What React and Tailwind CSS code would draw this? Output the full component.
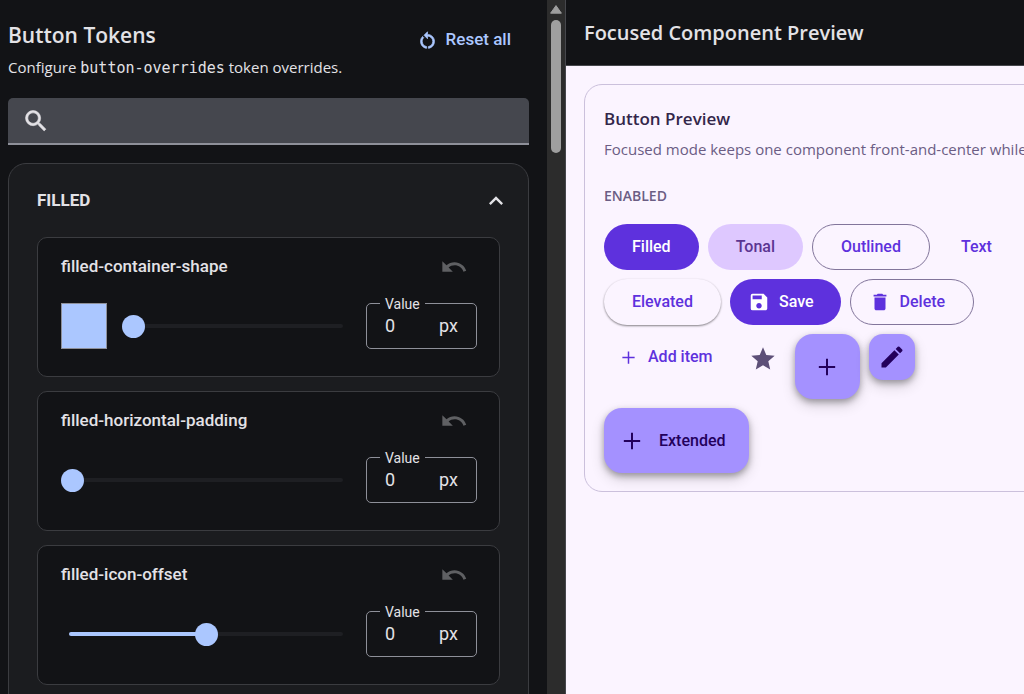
import { useState } from "react";
import {
  MdDelete,
  MdEdit,
  MdExpandLess,
  MdRestartAlt,
  MdSave,
  MdSearch,
  MdStar,
  MdUndo,
} from "react-icons/md";

const TOKENS = [
  { name: "filled-container-shape", min: 0, max: 64, swatch: true },
  { name: "filled-horizontal-padding", min: 0, max: 64 },
  { name: "filled-icon-offset", min: -16, max: 16 },
];

function PlusIcon({ size }) {
  return (
    <svg width={size} height={size} viewBox="0 0 24 24" stroke="currentColor" strokeWidth="1.7" aria-hidden="true">
      <path d="M12 5v14M5 12h14" />
    </svg>
  );
}

function TokenCard({ token }) {
  const [value, setValue] = useState(0);
  const percent = ((value - token.min) / (token.max - token.min)) * 100;
  return (
    <article className="rounded-[10px] border border-[#3b3c40] bg-[#121316] pt-[6px] pr-[22px] pb-[27px] pl-[23px]">
      <div className="flex h-[46px] items-center justify-between">
        <h3 className="text-[17px] font-medium">{token.name}</h3>
        <button
          type="button"
          aria-label={`Undo ${token.name}`}
          onClick={() => setValue(0)}
          className="flex size-[46px] items-center justify-center text-[#5f6063]"
        >
          <MdUndo size={28} />
        </button>
      </div>
      <div className="mt-[13px] flex items-center gap-[15px]">
        {token.swatch && <div className="size-[46px] shrink-0 border border-[#8e9099] bg-[#abc7ff]" />}
        <div className="grid min-w-0 flex-1 items-center">
          <div className="col-start-1 row-start-1 mx-2 h-1 overflow-hidden rounded-full bg-[#1e1f23]">
            <div className="h-full bg-[#abc7ff]" style={{ width: `${percent}%` }} />
          </div>
          <input
            type="range"
            aria-label={token.name}
            min={token.min}
            max={token.max}
            value={value}
            onChange={(e) => setValue(Number(e.target.value))}
            className="col-start-1 row-start-1 h-6 w-full appearance-none bg-transparent [&::-webkit-slider-thumb]:size-[23px] [&::-webkit-slider-thumb]:appearance-none [&::-webkit-slider-thumb]:rounded-full [&::-webkit-slider-thumb]:bg-[#abc7ff]"
          />
        </div>
        <fieldset className="flex h-[46px] w-[111px] shrink-0 items-center justify-between rounded-[5px] border border-[#8e9099] px-[18px]">
          <legend className="-ml-[5px] h-0 px-[5px] text-sm leading-[0]">
            <label htmlFor={token.name}>Value</label>
          </legend>
          <input
            id={token.name}
            type="text"
            value={value}
            onChange={(e) => setValue(Number(e.target.value) || 0)}
            className="w-10 bg-transparent text-lg outline-none"
          />
          <span className="text-lg">px</span>
        </fieldset>
      </div>
    </article>
  );
}

const pill = "flex h-[46px] items-center rounded-full text-base font-medium";
const fab =
  "flex items-center bg-[#a491ff] text-[#23005c] shadow-[0_3px_6px_rgba(0,0,0,0.3),0_6px_14px_rgba(0,0,0,0.16)]";

export default function App() {
  return (
    <div className="flex h-screen overflow-hidden bg-[#121316] font-[Roboto,sans-serif] text-[#e3e2e6]">
      <aside className="flex w-[566px] shrink-0 border-r border-[#46474c]">
        <div className="min-w-0 flex-1 overflow-hidden pr-[18px] pl-2">
          <header className="flex items-start justify-between pt-[17px] pr-[18px]">
            <div className="font-['Open_Sans','Noto_Sans',sans-serif]">
              <h1 className="text-[21px] leading-9 font-semibold">Button Tokens</h1>
              <p className="text-[15px] leading-7">
                Configure <code className="font-['DejaVu_Sans_Mono',monospace] text-[15px]">button-overrides</code> token
                overrides.
              </p>
            </div>
            <button
              type="button"
              className="flex h-[46px] items-center gap-2 text-[17px] font-medium text-[#abc7ff]"
            >
              <MdRestartAlt
                size={21}
                stroke="currentColor"
                strokeWidth="0.8"
                className="[&_[fill=none]]:stroke-none"
              />
              Reset all
            </button>
          </header>
          <label className="mt-4 flex h-[47px] items-center rounded-t-[5px] border-b-2 border-[#8e9099] bg-[#45474e] pl-[14px]">
            <MdSearch
              size={28}
              stroke="currentColor"
              strokeWidth="0.5"
              className="[&_[fill=none]]:stroke-none"
            />
            <input type="search" aria-label="Search tokens" className="min-w-0 flex-1 bg-transparent px-3 outline-none" />
          </label>
          <section className="mt-[18px] rounded-[18px] border border-[#3b3c40] bg-[#1b1c1f] px-7 pb-7">
            <button
              type="button"
              aria-expanded="true"
              className="flex h-[73px] w-full items-center justify-between text-left"
            >
              <h2 className="text-[17px] font-bold">FILLED</h2>
              <MdExpandLess size={28} className="-mr-[10px]" />
            </button>
            <div className="flex flex-col gap-[14px]">
              {TOKENS.map((token) => (
                <TokenCard key={token.name} token={token} />
              ))}
            </div>
          </section>
        </div>
        <div className="flex w-[18px] shrink-0 flex-col items-center gap-[6px] bg-[#2c2c2c] pt-[5px]">
          <svg width="12" height="9" viewBox="0 0 12 9" fill="#9f9f9f" aria-hidden="true">
            <path d="M6 .6 11.4 8.2H.6Z" stroke="#9f9f9f" strokeLinejoin="round" />
          </svg>
          <div className="h-[133px] w-[10px] rounded-full bg-[#9f9f9f]" />
        </div>
      </aside>

      <main className="flex min-w-0 flex-1 flex-col overflow-hidden bg-[#fbf4ff]">
        <header className="flex h-[66px] shrink-0 items-center border-b border-[#46474c] bg-[#121316] px-[18px]">
          <h2 className="font-['Open_Sans','Noto_Sans',sans-serif] text-[20px] font-semibold">
            Focused Component Preview
          </h2>
        </header>
        <section className="mt-[18px] ml-[18px] w-[480px] rounded-[18px] border border-[#cbc0dc] px-[19px] pt-[18px] pb-[18px] text-[#5e31dd]">
          <div className="font-['Open_Sans','Noto_Sans',sans-serif]">
            <h3 className="text-[17px] leading-8 font-semibold text-[#33264a]">Button Preview</h3>
            <p className="text-[15px] leading-7 whitespace-nowrap text-[#6b5d84]">
              Focused mode keeps one component front-and-center while
            </p>
            <h4 className="mt-[21px] text-sm leading-6 font-semibold text-[#6b5d84]">ENABLED</h4>
          </div>
          <div className="mt-4 flex flex-wrap items-start gap-[9px]">
            <button type="button" className={`${pill} bg-[#5e31dd] px-7 text-white`}>Filled</button>
            <button type="button" className={`${pill} bg-[#dec8ff] px-7 text-[#5b3592]`}>Tonal</button>
            <button type="button" className={`${pill} border border-[#82759b] px-7`}>Outlined</button>
            <button type="button" className={`${pill} px-[22px]`}>Text</button>
            <button
              type="button"
              className={`${pill} bg-[#fbf4ff] px-7 shadow-[0_1px_2px_rgba(0,0,0,0.4),0_1px_3px_rgba(0,0,0,0.1)]`}
            >
              Elevated
            </button>
            <button type="button" className={`${pill} gap-[9px] bg-[#5e31dd] pr-[27px] pl-[18px] text-white`}>
              <MdSave size={22} />
              Save
            </button>
            <button type="button" className={`${pill} gap-[9px] border border-[#82759b] pr-7 pl-[18px]`}>
              <MdDelete size={22} />
              Delete
            </button>
            <button type="button" className={`${pill} gap-[9px] pr-[18px] pl-[14px]`}>
              <PlusIcon size={21} />
              Add item
            </button>
            <button
              type="button"
              aria-label="Favorite"
              className="flex h-[50px] w-[46px] items-center justify-center text-[#5d4f78]"
            >
              <MdStar size={28} />
            </button>
            <button type="button" aria-label="Add" className={`${fab} size-[65px] justify-center rounded-[18px]`}>
              <PlusIcon size={28} />
            </button>
            <button type="button" aria-label="Edit" className={`${fab} size-[46px] justify-center rounded-[14px]`}>
              <MdEdit size={28} />
            </button>
            <button
              type="button"
              className={`${fab} h-[65px] gap-[13px] rounded-[18px] pr-[23px] pl-[14px] text-base font-medium`}
            >
              <PlusIcon size={28} />
              Extended
            </button>
          </div>
        </section>
      </main>
    </div>
  );
}
